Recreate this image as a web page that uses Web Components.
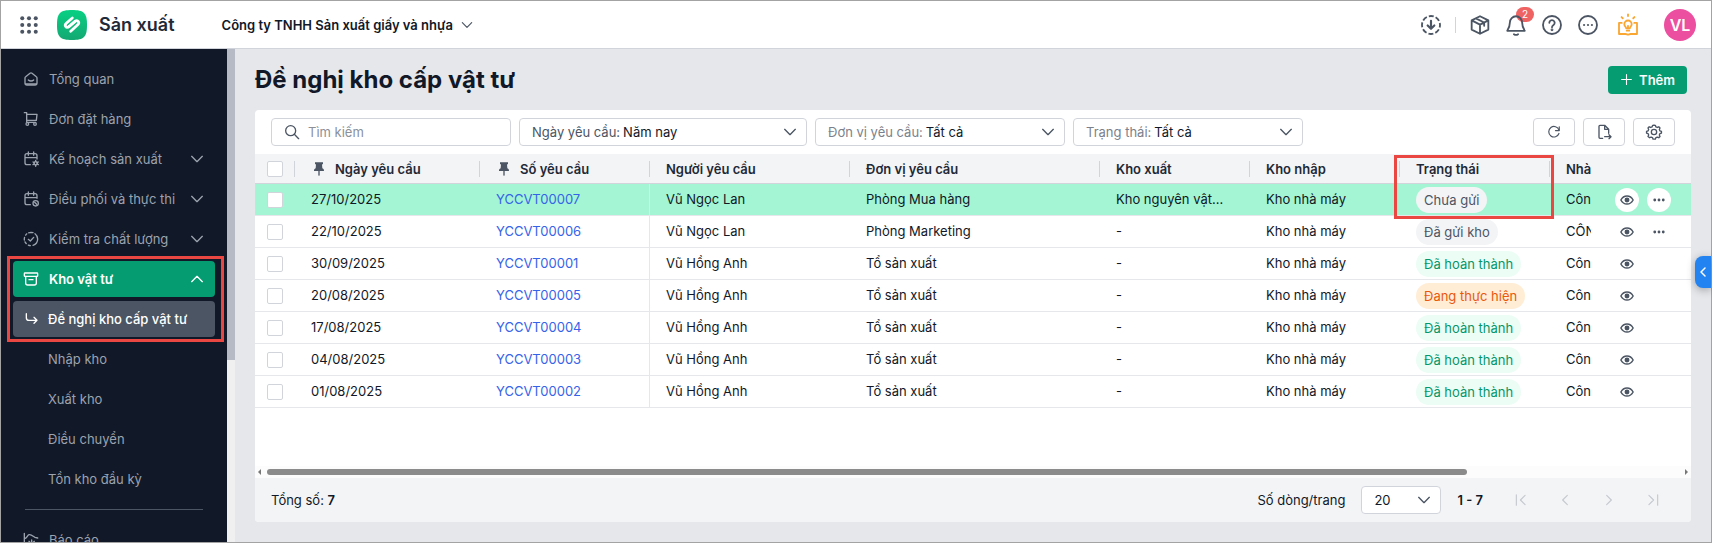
<!DOCTYPE html>
<html lang="vi">
<head>
<meta charset="utf-8">
<meta name="viewport" content="width=device-width, initial-scale=1">
<title>Đề nghị kho cấp vật tư</title>
<style>
  html, body { margin: 0; height: 100%; }
  body { font: 13px/20px Inter, "Liberation Sans", sans-serif; color: #111827; background: #e5e7eb; }
</style>
</head>
<body>
<app-shell></app-shell>

<script>
const ICONS = {
  home: '<path d="M3 10.500a2.500 2.500 0 0 1 1-2l6.500-5.200a2.500 2.500 0 0 1 3 0L20 8.500a2.500 2.500 0 0 1 1 2V18a3 3 0 0 1-3 3H6a3 3 0 0 1-3-3z"/><path d="M4 19.500h16M8 13.500c2 2 6 2 8 0"/>',
  cart: '<path d="M2 2.500h3.500V17H19M5.500 5H21l-1 9H5.500"/><circle cx="6.500" cy="19.500" r="2"/><circle cx="18" cy="19.500" r="2"/>',
  calgear: '<path d="M11 20.500H6a3 3 0 0 1-3-3V7a3 3 0 0 1 3-3h12a3 3 0 0 1 3 3v5M3 10h18M8 1.500v5M16 1.500v5"/><circle cx="19" cy="18.500" r="2.500"/><path d="M19 14v2M19 21v2M15 16.500l2 1M21 19.500l2 1M15 20.500l2-1M21 17.500l2-1"/>',
  calclock: '<path d="M11 20.500H6a3 3 0 0 1-3-3V7a3 3 0 0 1 3-3h12a3 3 0 0 1 3 3v4M3 10h18M8 1.500v5M16 1.500v5"/><circle cx="19" cy="18.500" r="4"/><path d="M17.500 17l3 3"/>',
  check: '<path d="M8.500 2.700A10 10 0 0 1 12 2a10 10 0 0 1 3 .5M18 4a10 10 0 0 1 4 8 10 10 0 0 1-7 9.500M11 22a10 10 0 0 1-3-.8M5 19a10 10 0 0 1-2-2.600M2 13.500a10 10 0 0 1 .3-4M4 6.200A10 10 0 0 1 5.700 4.300"/><path d="M8 12.500l3 2.500 5-5.500"/>',
  archive: '<rect x="2" y="3" width="20" height="5" rx="1"/><path d="M4 8v10a3 3 0 0 0 3 3h10a3 3 0 0 0 3-3V8M9 13h6"/>',
  sub: '<path d="M5 4v6a4 4 0 0 0 4 4h12M16.500 9.500L21 14l-4.500 4.500"/>',
  chart: '<path d="M2 2v20h20M2 10c4 0 4-5 7-6s7 3 9 4l4 1M9 14l4 4 4-4M13 18v-6"/>',
  down: '<path d="M4 8l8 8 8-8"/>',
  up: '<path d="M4 16l8-8 8 8"/>',
  search: '<circle cx="10" cy="10" r="7.500"/><path d="M15.500 15.500L22 22"/>',
  plus: '<path d="M12 3v18M3 12h18"/>',
  refresh: '<path d="M20.500 14.500A9 9 0 1 1 20.500 8.500"/><path d="M21 3v6.500h-6.500"/>',
  export: '<path d="M10 21.500H6A1.500 1.500 0 0 1 4.500 20V3.500A1.500 1.500 0 0 1 6 2h7l6 6v6M13 2v6h6M13 19h9.500M19.500 16l3 3-3 3"/>',
  gear: '<path d="M12 1.700l2 .3.900 2.400 2 .8 2.300-1 1.800 1.800-1 2.300.8 2 2.400.9v2.400l-2.400.9-.8 2 1 2.300-1.800 1.800-2.300-1-2 .8-.9 2.400h-3.400l-.9-2.400-2-.8-2.300 1L3 18.800l1-2.300-.8-2-2.400-.9v-2.400l2.400-.9.8-2L3 6l1.800-1.800 2.300 1 2-.8L10 2z"/><circle cx="12" cy="12" r="4"/>',
  eye: '<path d="M1.500 12C4 7.200 7.700 5 12 5s8 2.200 10.500 7c-2.500 4.800-6.200 7-10.500 7s-8-2.200-10.500-7z"/><circle cx="12" cy="12" r="3" fill="currentColor"/>',
  dots: '<g fill="currentColor" stroke="none"><circle cx="3.500" cy="12" r="2.800"/><circle cx="12" cy="12" r="2.800"/><circle cx="20.500" cy="12" r="2.800"/></g>',
  pin: '<path fill="currentColor" stroke="none" d="M6 2h12v3h-1.500l.5 6c2 1 2.500 2 2.500 4H13v6l-1 2-1-2v-6H4.500c0-2 .5-3 2.500-4l.5-6H6z"/>',
  first: '<path d="M4 3v18M19 4l-8 8 8 8"/>',
  prev: '<path d="M16 4l-8 8 8 8"/>',
  next: '<path d="M8 4l8 8-8 8"/>',
  last: '<path d="M20 3v18M5 4l8 8-8 8"/>',
  apps: '<g fill="currentColor" stroke="none"><circle cx="3" cy="3" r="2.700"/><circle cx="12" cy="3" r="2.700"/><circle cx="21" cy="3" r="2.700"/><circle cx="3" cy="12" r="2.700"/><circle cx="12" cy="12" r="2.700"/><circle cx="21" cy="12" r="2.700"/><circle cx="3" cy="21" r="2.700"/><circle cx="12" cy="21" r="2.700"/><circle cx="21" cy="21" r="2.700"/></g>',
  download: '<circle cx="12" cy="12" r="10.800" stroke-linecap="butt" stroke-dasharray="6 2.482" stroke-dashoffset="3"/><path stroke-width="2.600" d="M12 7v9M8 12.500l4 4 4-4"/>',
  box: '<path d="M12 1.500L22 6.500v11L12 22.500 2 17.500v-11zM2 6.500l10 5 10-5M12 11.500v11M7 4l10 5v4"/>',
  bell: '<path d="M12 1.500a7.300 7.300 0 0 0-7.300 7.300c0 5-1 7-3.200 10.200h21c-2.200-3.200-3.200-5.200-3.200-10.200A7.300 7.300 0 0 0 12 1.500z"/><path d="M9.500 23c1.500 1 3.500 1 5 0"/>',
  help: '<circle cx="12" cy="12" r="10.800"/><path d="M8.800 9.300a3.200 3.200 0 1 1 5 2.700c-1.300.9-1.800 1.400-1.800 2.800"/><circle cx="12" cy="17.800" r=".6"/>',
  more: '<circle cx="12" cy="12" r="10.800"/><g fill="currentColor" stroke="none"><circle cx="7.300" cy="12" r="1.300"/><circle cx="12" cy="12" r="1.300"/><circle cx="16.700" cy="12" r="1.300"/></g>',
  guide: '<path d="M4.500 9.500H1.200v13.300H9c1.500 0 2 .8 3 .8s1.500-.8 3-.8h7.800V9.500h-3.300"/><path d="M9.800 16c0-1.500-2.200-2.500-2.200-5a4.400 4.400 0 0 1 8.800 0c0 2.500-2.200 3.500-2.200 5zM12 13v3M10.500 18.800h3M12-.8v2M4.300 2.500l1.400 1.400M19.700 2.500l-1.400 1.400"/>'
};

const define = (tag, css, html) => {
  customElements.define(tag, class extends HTMLElement {
    connectedCallback() {
      if (this.shadowRoot) return;
      const root = this.attachShadow({ mode: 'open' });
      const t = document.createElement('template');
      t.innerHTML = `<style>*,::before,::after{box-sizing:border-box}button,input,select{font:inherit;color:inherit;margin:0}button{border:0;padding:0;background:none;display:inline-flex;align-items:center;justify-content:center}${css}</style>` +
        (typeof html === 'function' ? html(this) : html);
      root.append(t.content.cloneNode(true));
    }
  });
};

define('ui-icon',
  `:host{display:inline-flex;flex:none;width:var(--size,16px);height:var(--size,16px)}
   svg{width:100%;height:100%;overflow:visible;fill:none;stroke:currentColor;stroke-width:var(--stroke,2);stroke-linecap:round;stroke-linejoin:round}`,
  el => `<svg viewBox="0 0 24 24" aria-hidden="true">${ICONS[el.getAttribute('name')]}</svg>`);

define('app-header',
  `:host{display:flex;align-items:center;height:48px;box-sizing:border-box;flex:none;padding:0 15px 0 19px;background:#fff;border-bottom:1px solid #d1d5db;color:#4b5563}
   .apps{--size:18px;margin-right:19px}
   .logo{width:30px;height:30px;margin-right:12px}
   .name{font-size:18px;line-height:24px;font-weight:600;color:#1f2937;margin-right:47px}
   .org{font-weight:600;color:#111827;gap:7px;--size:14px;white-space:nowrap}
   .org ui-icon{color:#4b5563}
   .tools{display:flex;align-items:center;gap:16px;margin-left:auto;--size:20px;--stroke:2.200}
   .tools button{position:relative}
   .tools ui-icon{position:relative;z-index:1}
   .sep{width:1px;height:16px;background:#d1d5db;margin:0 -2px}
   .count{position:absolute;left:10px;top:-8px;width:18px;height:15px;border-radius:8px;background:#f06363;color:#fff;font-size:10px;line-height:15px}
   .guide{color:#faa732;margin:0 4px}
   .avatar{width:32px;height:32px;border-radius:50%;background:#ec4f9f;color:#fff;font-size:16px;font-weight:600;margin-left:6px}`,
  `<button class="apps" aria-label="Ứng dụng"><ui-icon name="apps"></ui-icon></button>
   <svg class="logo" viewBox="0 0 30 30" aria-hidden="true">
     <defs><linearGradient id="g" x1="0" y1="0" x2="0" y2="1"><stop offset="0" stop-color="#08d083"/><stop offset="1" stop-color="#13a873"/></linearGradient></defs>
     <path fill="url(#g)" d="M15 0c12 0 15 3 15 15s-3 15-15 15S0 27 0 15 3 0 15 0z"/>
     <path fill="none" stroke="#fff" stroke-width="2.800" stroke-linecap="round" stroke-linejoin="round" d="M15.300 8l-6 5.200c-2.300 2.100-.2 5.300 2.500 3.600l6.400-5.600"/>
     <path fill="none" stroke="#fff" stroke-width="2.800" stroke-linecap="round" stroke-linejoin="round" d="M14.700 22l6-5.200c2.300-2.100.2-5.300-2.500-3.600L11.800 18.200" opacity="0"/>
     <path fill="none" stroke="#fff" stroke-width="2.800" stroke-linecap="round" stroke-linejoin="round" d="M11.800 16.800l6.400-5.600c2.700-1.700 4.800 1.500 2.500 3.600l-7 6.400"/>
   </svg>
   <span class="name">Sản xuất</span>
   <button class="org">Công ty TNHH Sản xuất giấy và nhựa<ui-icon name="down"></ui-icon></button>
   <div class="tools">
     <button aria-label="Tải xuống"><ui-icon name="download"></ui-icon></button>
     <span class="sep"></span>
     <button aria-label="Sản phẩm"><ui-icon name="box"></ui-icon></button>
     <button aria-label="Thông báo"><ui-icon name="bell"></ui-icon><span class="count">2</span></button>
     <button aria-label="Trợ giúp"><ui-icon name="help"></ui-icon></button>
     <button aria-label="Khác"><ui-icon name="more"></ui-icon></button>
     <button class="guide" aria-label="Hướng dẫn"><ui-icon name="guide"></ui-icon></button>
     <button class="avatar">VL</button>
   </div>`);

define('nav-item',
  `:host{display:block;color:#9ca3af}
   a{display:flex;align-items:center;gap:10px;height:36px;padding:0 10px;border-radius:4px;color:inherit;text-decoration:none;white-space:nowrap}
   .pad{width:16px;flex:none}
   .arrow{margin-left:auto}
   :host([open]) a{background:#059c72;color:#fff;font-weight:600}
   :host([current]) a{background:#4b5563;color:#fff;font-weight:500}
   :host([child]) a{gap:9px}`,
  el => {
    const icon = el.getAttribute('icon'), arrow = el.getAttribute('arrow');
    return `<a href="#">${icon ? `<ui-icon name="${icon}"></ui-icon>` : '<span class="pad"></span>'}<slot></slot>${arrow ? `<ui-icon class="arrow" name="${arrow}"></ui-icon>` : ''}</a>`;
  });

define('app-sidebar',
  `:host{display:flex;flex:none;width:234px;background:#111827;overflow:hidden}
   nav{flex:1;display:flex;flex-direction:column;gap:4px;padding:12px;min-width:0}
   nav > *{flex:none}
   .group{position:relative;display:flex;flex-direction:column;gap:4px}
   .group::after{content:"";position:absolute;inset:-5px -9px -5px -6px;border:3px solid #ea4743;pointer-events:none}
   hr{width:178px;height:1px;border:0;margin:8px 12px;background:#4b5563}
   .bar{width:8px;background:#f0f0f0}
   .thumb{height:63%;background:#b5bac4}`,
  `<nav>
     <nav-item icon="home">Tổng quan</nav-item>
     <nav-item icon="cart">Đơn đặt hàng</nav-item>
     <nav-item icon="calgear" arrow="down">Kế hoạch sản xuất</nav-item>
     <nav-item icon="calclock" arrow="down">Điều phối và thực thi</nav-item>
     <nav-item icon="check" arrow="down">Kiểm tra chất lượng</nav-item>
     <div class="group">
       <nav-item open icon="archive" arrow="up">Kho vật tư</nav-item>
       <nav-item current child icon="sub">Đề nghị kho cấp vật tư</nav-item>
     </div>
     <nav-item child>Nhập kho</nav-item>
     <nav-item child>Xuất kho</nav-item>
     <nav-item child>Điều chuyển</nav-item>
     <nav-item child>Tồn kho đầu kỳ</nav-item>
     <hr>
     <nav-item icon="chart">Báo cáo</nav-item>
   </nav>
   <div class="bar"><div class="thumb"></div></div>`);

define('select-field',
  `:host{display:flex;box-sizing:border-box;position:relative;align-items:center;height:28px;background:#fff;border:1px solid #d1d5db;border-radius:4px;padding:0 8px 0 12px;white-space:nowrap}
   label{color:var(--label,#7b818c);margin-right:3px}
   label:empty{display:none}
   select{appearance:none;border:0;background:none;flex:1;min-width:0;padding:0;height:26px;outline:0;color:#111827}
   ui-icon{color:#4b5563}`,
  el => `<label for="s">${el.getAttribute('label') || ''}</label><select id="s" aria-label="${el.getAttribute('name')}"><option>${el.getAttribute('value')}</option></select><ui-icon name="down"></ui-icon>`);

define('status-badge',
  `:host{display:inline-flex;align-items:center;height:26px;padding:0 8px;border-radius:13px;background:#f3f4f6;color:#4b5563}
   :host([kind=done]){background:#ecfdf5;color:#059669}
   :host([kind=doing]){background:#ffedd5;color:#ea580c}`,
  `<slot></slot>`);

const ROWS = [
  ['27/10/2025', 'YCCVT00007', 'Vũ Ngọc Lan', 'Phòng Mua hàng', 'Kho nguyên vật...', 'Chưa gửi', '', 'Côn', true],
  ['22/10/2025', 'YCCVT00006', 'Vũ Ngọc Lan', 'Phòng Marketing', '-', 'Đã gửi kho', '', 'CÔN', true],
  ['30/09/2025', 'YCCVT00001', 'Vũ Hồng Anh', 'Tổ sản xuất', '-', 'Đã hoàn thành', 'done', 'Côn'],
  ['20/08/2025', 'YCCVT00005', 'Vũ Hồng Anh', 'Tổ sản xuất', '-', 'Đang thực hiện', 'doing', 'Côn'],
  ['17/08/2025', 'YCCVT00004', 'Vũ Hồng Anh', 'Tổ sản xuất', '-', 'Đã hoàn thành', 'done', 'Côn'],
  ['04/08/2025', 'YCCVT00003', 'Vũ Hồng Anh', 'Tổ sản xuất', '-', 'Đã hoàn thành', 'done', 'Côn'],
  ['01/08/2025', 'YCCVT00002', 'Vũ Hồng Anh', 'Tổ sản xuất', '-', 'Đã hoàn thành', 'done', 'Côn']
];

define('request-table',
  `:host{display:block;overflow:hidden}
   table{width:100%;min-width:1436px;table-layout:fixed;border-collapse:separate;border-spacing:0}
   th,td{padding:0 16px;text-align:left;white-space:nowrap}
   th{position:relative;height:30px;background:#f3f4f6;border-bottom:1px solid #d1d5db;font-weight:600;color:#1f2937}
   td{height:32px;padding-bottom:2px;border-bottom:1px solid #e5e7eb;overflow:hidden;text-overflow:ellipsis}
   th.sep::before{content:"";position:absolute;right:0;top:7px;width:1px;height:16px;background:#d1d5db}
   td.edge{border-right:1px solid #e5e7eb}
   .pick{padding:0 0 0 12px}
   .state{padding-bottom:0}
   .cut{padding-right:0;text-overflow:clip}
   .act{padding:0 0 0 24px}
   .mark::after{content:"";position:absolute;z-index:1;left:-6px;top:1px;width:160px;height:64px;border:3px solid #ea4743;pointer-events:none}
   .pinned{display:flex;align-items:center;gap:8px}
   .pinned ui-icon{color:#4b5563}
   input{appearance:none;display:block;width:16px;height:16px;border:1px solid #d1d5db;border-radius:2px;background:#fff}
   td a{color:#3563e9;text-decoration:none}
   td status-badge{vertical-align:middle}
   .btns{display:flex;gap:8px;color:#4b5563}
   .btns button{width:24px;height:24px;border-radius:50%}
   .btns ui-icon{--size:14px;--stroke:2.500}
   .btns button + button ui-icon{--size:12px}
   tr.active td{background:#a3f5d3}
   tr.active button{background:#fff}`,
  () => `<table>
    <colgroup><col style="width:40px"><col style="width:185px"><col style="width:170px"><col style="width:200px"><col style="width:250px"><col style="width:150px"><col style="width:150px"><col style="width:150px"><col><col style="width:100px"></colgroup>
    <thead><tr>
      <th class="pick sep"><input type="checkbox" aria-label="Chọn tất cả"></th>
      <th class="sep"><div class="pinned"><ui-icon name="pin"></ui-icon>Ngày yêu cầu</div></th>
      <th class="sep"><div class="pinned"><ui-icon name="pin"></ui-icon>Số yêu cầu</div></th>
      <th class="sep">Người yêu cầu</th><th class="sep">Đơn vị yêu cầu</th><th class="sep">Kho xuất</th><th class="sep">Kho nhập</th>
      <th class="sep mark">Trạng thái</th><th class="cut">Nhà</th><th class="act"></th>
    </tr></thead>
    <tbody>${ROWS.map((r, i) => `<tr${i ? '' : ' class="active"'}>
      <td class="pick"><input type="checkbox" aria-label="Chọn ${r[1]}"></td>
      <td>${r[0]}</td><td class="edge"><a href="#">${r[1]}</a></td><td>${r[2]}</td><td>${r[3]}</td><td>${r[4]}</td><td>Kho nhà máy</td>
      <td class="state"><status-badge kind="${r[6]}">${r[5]}</status-badge></td><td class="cut">${r[7]}</td>
      <td class="act"><div class="btns"><button aria-label="Xem"><ui-icon name="eye"></ui-icon></button>${r[8] ? '<button aria-label="Thêm thao tác"><ui-icon name="dots"></ui-icon></button>' : ''}</div></td>
    </tr>`).join('')}</tbody></table>`);

define('request-page',
  `:host{display:flex;flex-direction:column;flex:1;min-width:0;padding:0 20px 20px;background:#e5e7eb}
   .top{display:flex;align-items:center;justify-content:space-between;height:61px;flex:none;padding-right:4px}
   h1{margin:0;font-size:24px;line-height:32px;font-weight:700}
   .add{height:28px;padding:0 12px;gap:6px;border-radius:4px;background:#059c72;color:#fff;font-weight:600;--size:13px}
   .card{display:flex;flex-direction:column;flex:1;min-height:0;background:#fff;border-radius:4px;overflow:hidden}
   .bar{display:flex;align-items:center;gap:8px;height:44px;flex:none;padding:0 16px}
   .search{display:flex;align-items:center;gap:8px;width:240px;height:28px;border:1px solid #d1d5db;border-radius:4px;padding:0 12px;color:#4b5563}
   .search input{border:0;outline:0;padding:0;min-width:0;flex:1;background:none}
   .search input::placeholder{color:#8b9099;opacity:1}
   .tools{display:flex;gap:8px;margin-left:auto}
   .tools button{width:42px;height:28px;border:1px solid #d1d5db;border-radius:4px;background:#fff;color:#4b5563}
   .date{--label:#4b5563}
   .hscroll{display:flex;align-items:center;gap:6px;height:12px;flex:none;margin-top:auto;padding:0 3px;background:#fcfcfc}
   .track{flex:1}
   .thumb{width:85%;height:6px;border-radius:3px;background:#8b8b8b}
   .l,.r{border:3px solid transparent;width:0;height:0}
   .l{border-right-color:#777;border-left:0}.r{border-left-color:#777;border-right:0}
   footer{display:flex;align-items:center;height:44px;flex:none;padding:0 24px 0 16px;background:#f3f4f6}
   footer b{font-weight:600}
   .size{margin-left:auto}
   .range{margin:0 24px 0 16px}
   .pager{display:flex;gap:16px;--size:14px}
   .pager button{width:28px;height:28px;color:#c5c9d0}`,
  `<div class="top"><h1>Đề nghị kho cấp vật tư</h1><button class="add"><ui-icon name="plus"></ui-icon>Thêm</button></div>
   <div class="card">
     <div class="bar">
       <label class="search"><ui-icon name="search"></ui-icon><input type="text" placeholder="Tìm kiếm" aria-label="Tìm kiếm"></label>
       <select-field class="date" style="width:288px" label="Ngày yêu cầu:" name="Ngày yêu cầu" value="Năm nay"></select-field>
       <select-field style="width:250px" label="Đơn vị yêu cầu:" name="Đơn vị yêu cầu" value="Tất cả"></select-field>
       <select-field style="width:230px" label="Trạng thái:" name="Trạng thái" value="Tất cả"></select-field>
       <div class="tools">
         <button aria-label="Tải lại"><ui-icon name="refresh" style="--size:14px"></ui-icon></button>
         <button aria-label="Xuất"><ui-icon name="export"></ui-icon></button>
         <button aria-label="Cài đặt"><ui-icon name="gear"></ui-icon></button>
       </div>
     </div>
     <request-table></request-table>
     <div class="hscroll"><i class="l"></i><div class="track"><div class="thumb"></div></div><i class="r"></i></div>
     <footer>
       <span>Tổng số: <b>7</b></span>
       <span class="size">Số dòng/trang</span>
       <select-field style="width:80px;margin-left:16px" name="Số dòng/trang" value="20"></select-field>
       <b class="range">1 - 7</b>
       <div class="pager">
         <button disabled aria-label="Trang đầu"><ui-icon name="first"></ui-icon></button>
         <button disabled aria-label="Trang trước"><ui-icon name="prev"></ui-icon></button>
         <button disabled aria-label="Trang sau"><ui-icon name="next"></ui-icon></button>
         <button disabled aria-label="Trang cuối"><ui-icon name="last"></ui-icon></button>
       </div>
     </footer>
   </div>`);

define('app-shell',
  `:host{display:flex;flex-direction:column;height:100vh;box-sizing:border-box;border:1px solid #a3a3a3;overflow:hidden}
   main{display:flex;flex:1;min-height:0}
   .drawer{position:fixed;right:1px;top:256px;width:16px;height:32px;border-radius:8px 0 0 8px;background:#2383f0;color:#fff;box-shadow:0 2px 8px rgba(0,0,0,.3);--size:12px;--stroke:3}`,
  `<app-header></app-header>
   <main><app-sidebar></app-sidebar><request-page></request-page></main>
   <button class="drawer" aria-label="Mở bảng bên"><ui-icon name="prev"></ui-icon></button>`);
</script>
</body>
</html>
